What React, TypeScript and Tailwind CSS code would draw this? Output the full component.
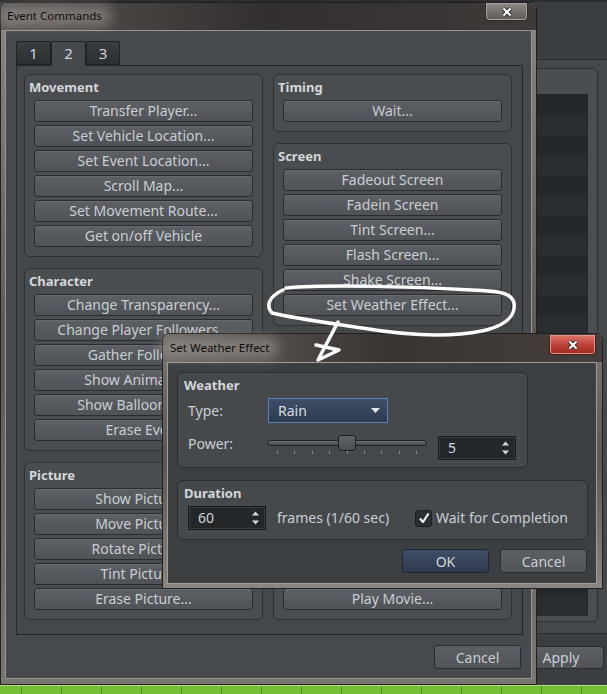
import React from 'react'

const F = "font-['Noto_Sans',sans-serif]"

const movement = ['Transfer Player...', 'Set Vehicle Location...', 'Set Event Location...', 'Scroll Map...', 'Set Movement Route...', 'Get on/off Vehicle']
const character = ['Change Transparency...', 'Change Player Followers...', 'Gather Followers', 'Show Animation...', 'Show Balloon Icon...', 'Erase Event']
const picture = ['Show Picture...', 'Move Picture...', 'Rotate Picture...', 'Tint Picture...', 'Erase Picture...']
const timing = ['Wait...']
const screen = ['Fadeout Screen', 'Fadein Screen', 'Tint Screen...', 'Flash Screen...', 'Shake Screen...', 'Set Weather Effect...']
const audio = ['Play BGM...', 'Fadeout BGM...', 'Save BGM', 'Resume BGM', 'Play BGS...', 'Fadeout BGS...', 'Play ME...', 'Play SE...', 'Stop SE', 'Play Movie...']

function XGlyph() {
  return (
    <svg width="12" height="10" viewBox="0 0 12 10">
      <path d="M2.5 1.5 L9.5 8.5 M9.5 1.5 L2.5 8.5" stroke="#2b2b2b" strokeWidth="4.2" />
      <path d="M2.5 1.5 L9.5 8.5 M9.5 1.5 L2.5 8.5" stroke="#ffffff" strokeWidth="2.2" />
    </svg>
  )
}

function CmdButton({ label }: { label: string }) {
  return (
    <div className="flex h-[22px] items-center justify-center rounded-[3px] border border-[#2a2c2f] bg-linear-to-b from-[#5d6064] to-[#4f5256] text-[14px] leading-none text-[#c9ced3] shadow-[inset_0_1px_0_#676a6e]">
      {label}
    </div>
  )
}

function Group({ title, items }: { title: string; items: string[] }) {
  return (
    <div className="rounded-[6px] border border-[#2e3033] bg-[#4a4d50] px-[9px] pb-[9px]">
      <div className="-ml-[5px] flex h-[25px] items-center text-[13px] font-bold leading-none text-[#d3d7db]">{title}</div>
      <div className="flex flex-col gap-[3px]">
        {items.map((t) => (
          <CmdButton key={t} label={t} />
        ))}
      </div>
    </div>
  )
}

function SpinBox({ value, w }: { value: string; w: string }) {
  return (
    <div className={`flex h-[24px] ${w} items-center justify-between border border-[#15171a] bg-[#24272a] pl-[9px] pr-[5px] shadow-[inset_0_0_0_1px_#3a3d40]`}>
      <span className="text-[14px] leading-none text-[#d2d6da]">{value}</span>
      <svg width="9" height="16" viewBox="0 0 9 16">
        <path d="M4.5 1.5 L8 5.5 L1 5.5 Z" fill="#d6dade" />
        <path d="M4.5 14.5 L8 10.5 L1 10.5 Z" fill="#d6dade" />
      </svg>
    </div>
  )
}

function MainWindow() {
  return (
    <div className="absolute left-0 top-[2px] flex h-[683px] w-[537px] flex-col rounded-t-[7px] border border-[#221f1e] bg-linear-to-b from-[#8b8681] via-[#5f5a57] to-[#7a7571] px-[4px] pb-[5px]">
      <div className="-mx-[4px] flex h-[27px] items-start justify-between rounded-t-[6px] bg-linear-to-r from-[#5a5552] via-[#332f2e] to-[#3f3a38] px-[4px]">
        <div className="relative ml-[2px] mt-[5px]">
          <span className="absolute -inset-x-[10px] -inset-y-[3px] rounded-full bg-[#b1aba5]/45 blur-[6px]" />
          <span className={`relative block text-[11.5px] leading-[16px] text-[#0d0d0d] ${F}`}>Event Commands</span>
        </div>
        <div className="mr-[4px] flex h-[18px] w-[43px] items-center justify-center rounded-b-[4px] border border-t-0 border-[#2d2a29] bg-linear-to-b from-[#8e8984] to-[#5e5956] shadow-[inset_0_0_0_1px_#a7a29d]">
          <XGlyph />
        </div>
      </div>
      <div className="flex flex-1 flex-col border border-[#9b9691] bg-[#46494d] pl-[10px] pt-[10px]">
        <div className="flex h-[24px] items-end">
          <div className="flex h-[24px] w-[35px] items-center justify-center rounded-t-[2px] border border-[#1f2123] bg-linear-to-b from-[#3a3d40] to-[#2c2f32] text-[15px] text-[#d0d4d8]">1</div>
          <div className="relative z-10 -mb-px flex h-[25px] w-[35px] items-center justify-center rounded-t-[2px] border border-b-0 border-[#1f2123] bg-[#46494c] pb-px text-[15px] text-[#d0d4d8]">2</div>
          <div className="flex h-[24px] w-[34px] items-center justify-center rounded-t-[2px] border border-[#1f2123] bg-linear-to-b from-[#3a3d40] to-[#2c2f32] text-[15px] text-[#d0d4d8]">3</div>
        </div>
        <div className="grid h-[570px] w-[507px] grid-cols-[239px_239px] gap-x-[10px] border border-[#25272a] bg-[#45484b] pl-[7px] pt-[8px]">
          <div className="flex flex-col gap-[11px]">
            <Group title="Movement" items={movement} />
            <Group title="Character" items={character} />
            <Group title="Picture" items={picture} />
          </div>
          <div className="flex flex-col gap-[11px]">
            <Group title="Timing" items={timing} />
            <Group title="Screen" items={screen} />
            <Group title="Audio & Video" items={audio} />
          </div>
        </div>
        <div className="mr-[10px] mt-[10px] flex justify-end">
          <div className="flex h-[24px] w-[87px] items-center justify-center rounded-[3px] border border-[#2a2c2f] bg-linear-to-b from-[#5c5f63] to-[#505357] text-[14px] text-[#c9ced3]">Cancel</div>
        </div>
      </div>
    </div>
  )
}

function WeatherDialog() {
  return (
    <div className="absolute left-[162px] top-[333px] flex h-[256px] w-[441px] flex-col rounded-t-[7px] border border-[#221f1e] bg-linear-to-b from-[#7b7672] via-[#5c5754] to-[#8a8581] pb-[4px] pl-[4px] pr-[5px]">
      <div className="-ml-[4px] -mr-[5px] flex h-[28px] items-start justify-between rounded-t-[6px] bg-linear-to-r from-[#6b6663] via-[#3a3533] to-[#443f3d] pl-[4px] pr-[5px]">
        <div className="relative ml-[3px] mt-[6px]">
          <span className="absolute -inset-x-[10px] -inset-y-[3px] rounded-full bg-[#b1aba5]/45 blur-[6px]" />
          <span className={`relative block text-[11.5px] leading-[16px] text-[#0d0d0d] ${F}`}>Set Weather Effect</span>
        </div>
        <div className="mr-[1px] mt-[1px] flex h-[20px] w-[47px] items-center justify-center rounded-b-[4px] border border-t-0 border-[#4a1a15] bg-linear-to-b from-[#d9776a] via-[#c0443a] to-[#9b2a20] shadow-[inset_0_0_0_1px_#e3968c]">
          <XGlyph />
        </div>
      </div>
      <div className="flex flex-1 flex-col border border-[#a39e99] bg-[#3c3f42] pl-[9px] pt-[9px]">
        <div className="flex h-[96px] w-[351px] flex-col rounded-[6px] border border-[#2a2c2f] bg-[#46494c] pl-[6px]">
          <div className="flex h-[25px] items-center text-[13px] font-bold leading-none text-[#d3d7db]">Weather</div>
          <div className="flex h-[25px] items-center pl-[4px]">
            <span className="w-[80px] text-[14px] leading-none text-[#c9ced3]">Type:</span>
            <div className="flex h-[25px] w-[120px] items-center justify-between border border-[#5582bb] bg-linear-to-b from-[#3f4f68] to-[#2d3a50] pl-[9px] pr-[7px]">
              <span className="text-[14px] leading-none text-[#d8dce0]">Rain</span>
              <svg width="9" height="5" viewBox="0 0 9 5">
                <path d="M0 0 L9 0 L4.5 5 Z" fill="#e2e6ea" />
              </svg>
            </div>
          </div>
          <div className="mt-[13px] flex h-[24px] items-start pl-[4px]">
            <span className="w-[79px] pt-[1px] text-[14px] leading-[14px] text-[#c9ced3]">Power:</span>
            <div className="relative -mt-[1px] h-[20px] w-[160px]">
              <div className="absolute left-0 right-0 top-[5px] h-[6px] rounded-full border border-[#202225] bg-linear-to-b from-[#6a6d70] to-[#45484b]" />
              <div className="absolute left-[71px] top-0 h-[16px] w-[18px] rounded-[3px] border border-[#1e2023] bg-linear-to-b from-[#606367] to-[#4b4e52]" />
              <div className="absolute left-[10px] right-[10px] top-[16px] flex justify-between">
                {Array.from({ length: 9 }).map((_, i) => (
                  <div key={i} className="h-[3px] w-px bg-[#8b8e91]" />
                ))}
              </div>
            </div>
            <div className="ml-[11px]">
              <SpinBox value="5" w="w-[78px]" />
            </div>
          </div>
        </div>
        <div className="mt-[12px] flex h-[60px] w-[411px] flex-col rounded-[6px] border border-[#2a2c2f] bg-[#46494c] pl-[6px]">
          <div className="flex h-[25px] items-center text-[13px] font-bold leading-none text-[#d3d7db]">Duration</div>
          <div className="flex h-[24px] items-center pl-[4px]">
            <SpinBox value="60" w="w-[78px]" />
            <span className="ml-[11px] w-[138px] text-[14px] leading-none text-[#c9ced3]">frames (1/60 sec)</span>
            <div className="flex h-[17px] w-[17px] items-center justify-center rounded-[3px] border border-[#1b1d20] bg-[#2c2f32]">
              <svg width="12" height="12" viewBox="0 0 12 12">
                <path d="M2 6.5 L5 10 L10.5 1.5" stroke="#eef0f2" strokeWidth="2.2" fill="none" strokeLinejoin="round" />
              </svg>
            </div>
            <span className="ml-[4px] text-[14px] leading-none text-[#c9ced3]">Wait for Completion</span>
          </div>
        </div>
        <div className="mr-[9px] mt-[9px] flex justify-end gap-[11px]">
          <div className="flex h-[24px] w-[87px] items-center justify-center rounded-[3px] border border-[#1d2532] bg-linear-to-b from-[#3f4e66] to-[#2e3a4f] text-[14px] text-[#d2d6da]">OK</div>
          <div className="flex h-[24px] w-[87px] items-center justify-center rounded-[3px] border border-[#2a2c2f] bg-linear-to-b from-[#5c5f63] to-[#505357] text-[14px] text-[#c9ced3]">Cancel</div>
        </div>
      </div>
    </div>
  )
}

export default function App() {
  return (
    <div className={`relative flex h-[694px] w-[607px] flex-col overflow-hidden bg-[#3b3e41] ${F}`}>
      <div className="h-[60px] border-b border-[#2a2c2f]">
        <div className="h-[2px] bg-[#2b2d30]" />
      </div>
      <div className="flex h-[574px] justify-end border-b border-[#2a2c2f] bg-[#45484b] pr-[9px]">
        <div className="mt-[8px] flex h-[554px] w-[150px] flex-col rounded-[6px] border border-[#2c2e31] bg-[#4b4e51] pb-[6px] pr-[9px] pt-[25px]">
          <div className="flex flex-1 flex-col border border-[#25272a]">
            {Array.from({ length: 26 }).map((_, i) => (
              <div key={i} className={i % 2 === 0 ? 'h-[20px] bg-[#25282b]' : 'h-[20px] bg-[#2b2e31]'} />
            ))}
          </div>
        </div>
      </div>
      <div className="flex h-[51px] justify-end pr-[3px] pt-[12px]">
        <div className="flex h-[23px] w-[86px] items-center justify-center rounded-[3px] border border-[#2a2c2f] bg-linear-to-b from-[#5c5f63] to-[#505357] text-[14px] text-[#c9ced3]">Apply</div>
      </div>
      <div className="flex h-[9px] border-t border-[#b7e27f] bg-[#72be35] pl-[21px]">
        {Array.from({ length: 15 }).map((_, i) => (
          <div key={i} className="h-full w-[40px] shrink-0 border-l border-[#4f8f23]" />
        ))}
      </div>

      <MainWindow />
      <WeatherDialog />

      <svg className="pointer-events-none absolute left-0 top-0" width="607" height="694" viewBox="0 0 607 694">
        <path
          d="M286 288 C330 284 420 287 472 290 C500 291 512 293 514 303 C516 316 505 326 482 331 C446 338 404 335 362 328 C322 322 292 318 272 313 C265 305 270 296 283 290"
          stroke="#ffffff"
          strokeWidth="3.5"
          fill="none"
          strokeLinecap="round"
          strokeLinejoin="round"
        />
        <path d="M338 322 L319 358 M316 345 L339 350 L318 360" stroke="#ffffff" strokeWidth="3.5" fill="none" strokeLinecap="round" strokeLinejoin="round" />
      </svg>
    </div>
  )
}
